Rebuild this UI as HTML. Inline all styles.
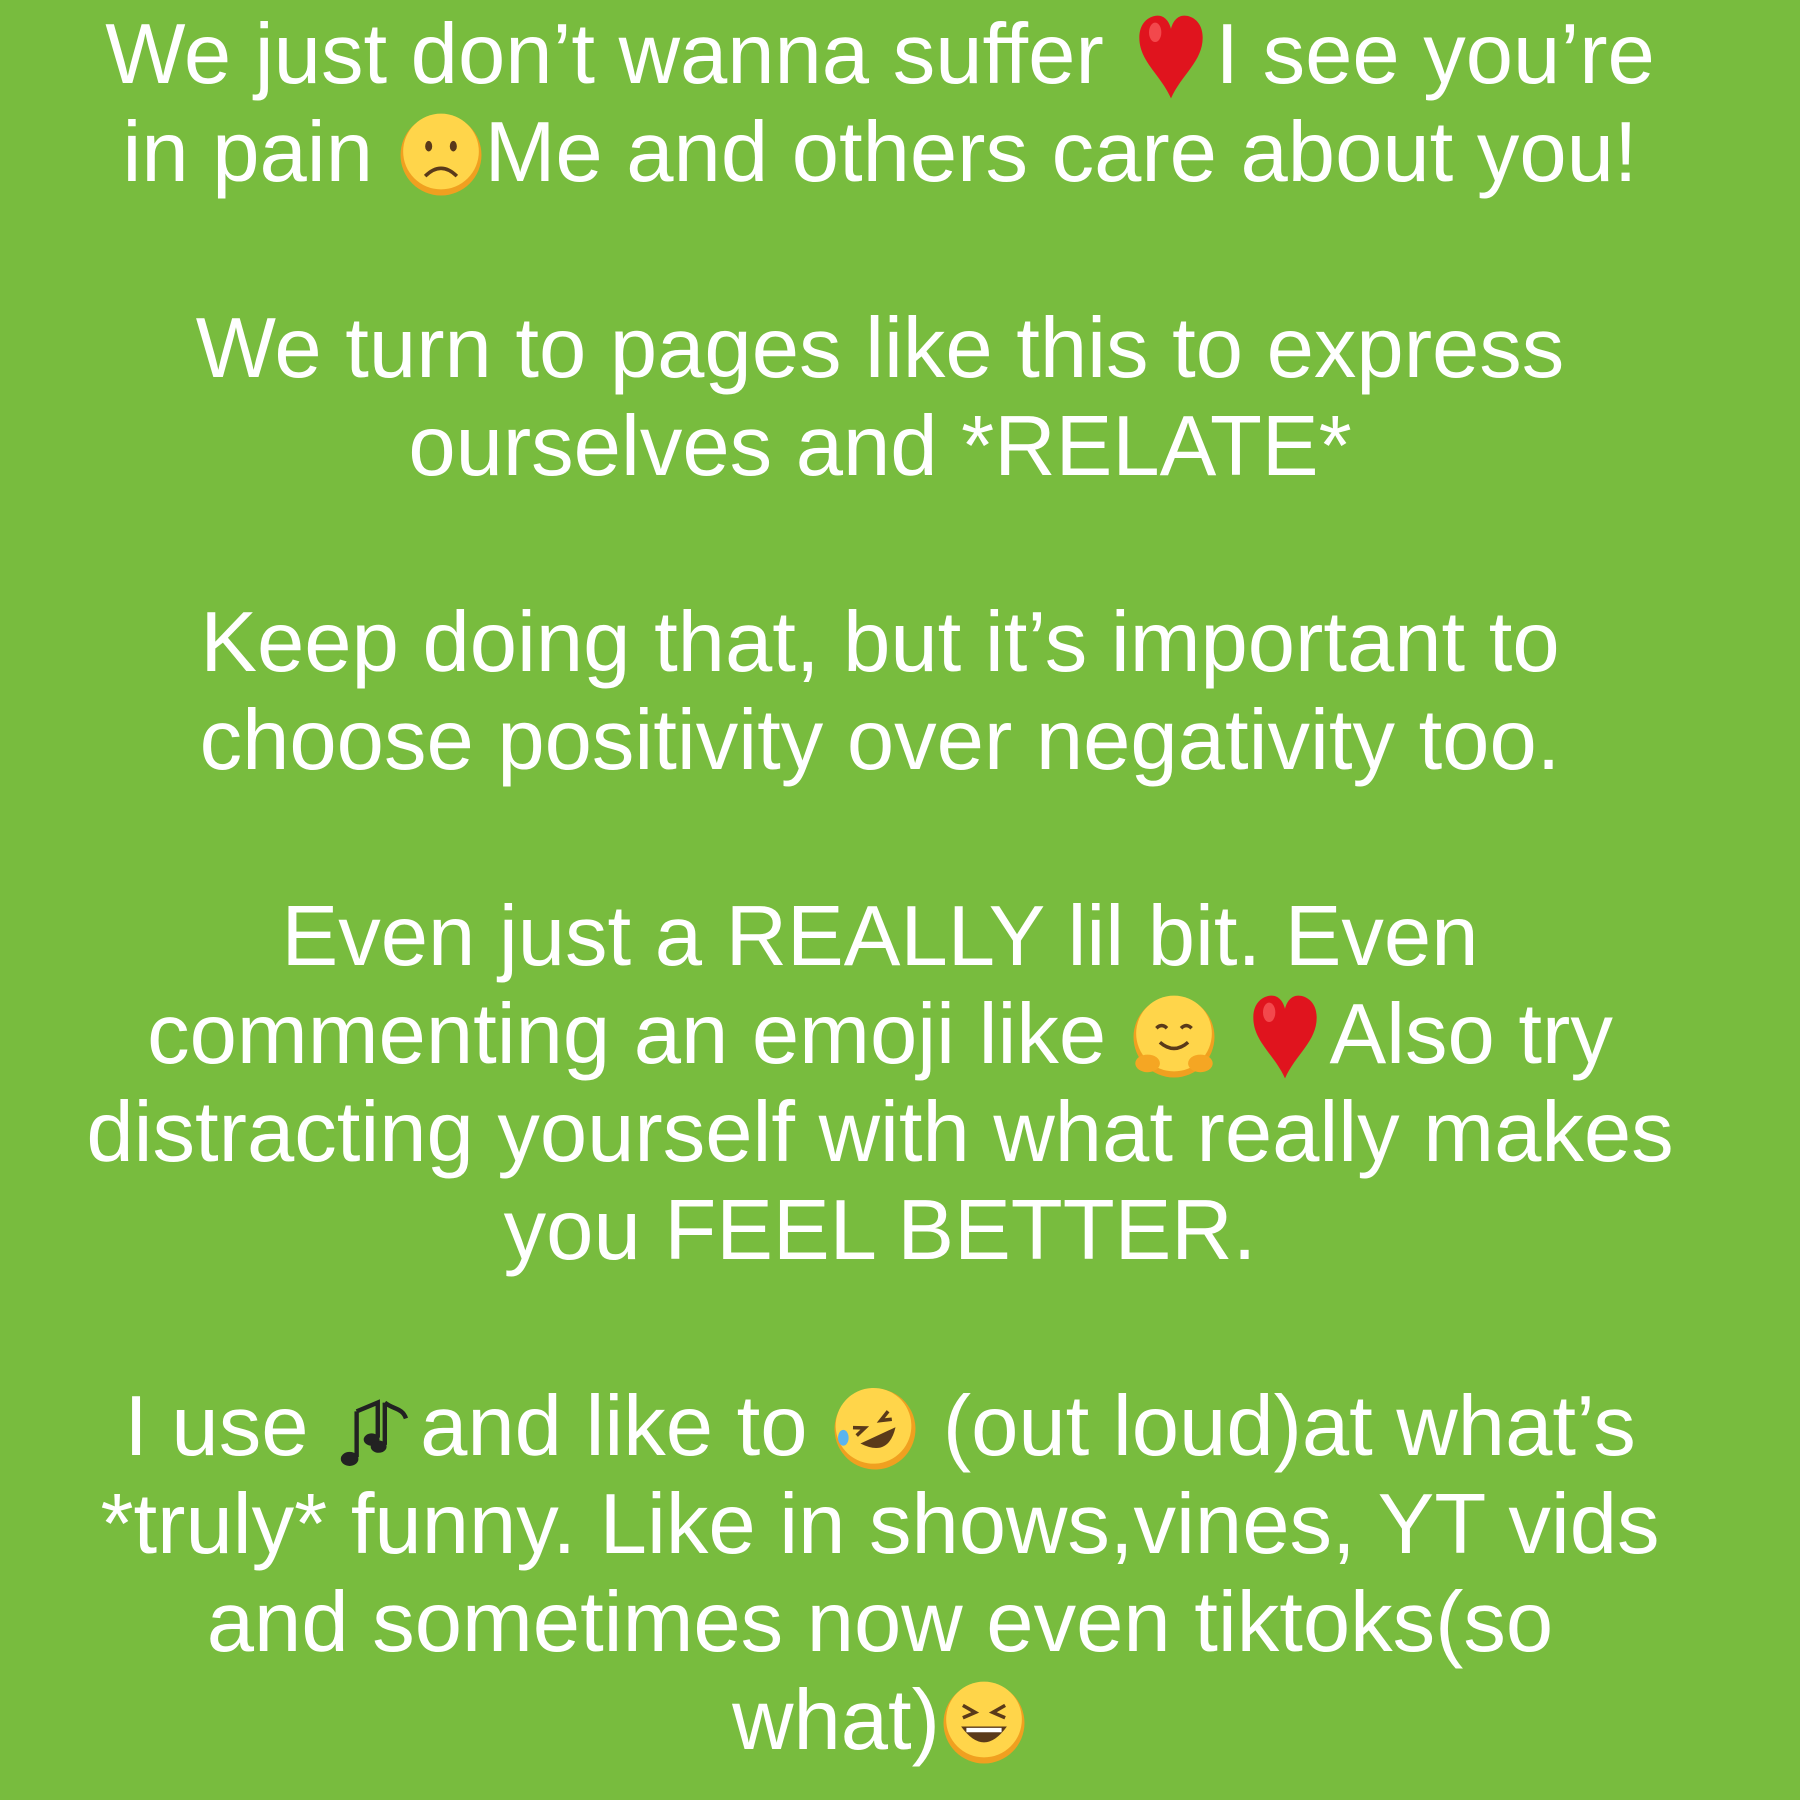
<!DOCTYPE html>
<html><head><meta charset="utf-8"><style>
html,body{margin:0;padding:0}
body{width:1800px;height:1800px;background:#78bc3e;overflow:hidden;font-family:"Liberation Sans",Arial,sans-serif;color:#fff;font-size:85px}
.w{position:absolute;top:6px;left:-20px;width:1800px;text-align:center}
.l{height:98px;line-height:98px;white-space:nowrap}
svg{display:inline-block;vertical-align:-18px;width:88px;height:88px}
</style></head><body>
<svg width="0" height="0" style="position:absolute"><defs>
<symbol id="heart" viewBox="0 0 100 100"><path d="M50 97 C38 70 14 55 14 28 C14 10 26 3 35 3 C43 3 48 10 50 18 C52 10 57 3 65 3 C74 3 86 10 86 28 C86 55 62 70 50 97Z" fill="#e0141e"/><ellipse cx="32" cy="22" rx="7" ry="11" fill="#ff6b6b" opacity=".6"/></symbol>
<symbol id="face" viewBox="0 0 100 100"><circle cx="50" cy="50" r="46" fill="#f0a020"/><circle cx="50" cy="46" r="43" fill="#ffd54a"/></symbol>
</defs></svg>
<div class="w">
<div class="l">We just don’t wanna suffer <svg viewBox="0 0 100 100"><use href="#heart"/></svg>I see you’re</div>
<div class="l">in pain <svg viewBox="0 0 100 100"><use href="#face"/><ellipse cx="36" cy="40" rx="4" ry="6" fill="#5a3a1a"/><ellipse cx="64" cy="40" rx="4" ry="6" fill="#5a3a1a"/><path d="M32 74 Q50 56 68 74" stroke="#5a3a1a" stroke-width="4" fill="none"/></svg>Me and others care about you!</div>
<div class="l"></div>
<div class="l">We turn to pages like this to express</div>
<div class="l">ourselves and *RELATE*</div>
<div class="l"></div>
<div class="l">Keep doing that, but it’s important to</div>
<div class="l">choose positivity over negativity too.</div>
<div class="l"></div>
<div class="l">Even just a REALLY lil bit. Even</div>
<div class="l">commenting an emoji like <svg viewBox="0 0 100 100"><use href="#face"/><path d="M30 40 Q36 34 42 40 M58 40 Q64 34 70 40" stroke="#5a3a1a" stroke-width="4" fill="none"/><path d="M34 56 Q50 70 66 56" stroke="#5a3a1a" stroke-width="4" fill="none"/><ellipse cx="20" cy="80" rx="14" ry="10" fill="#f5a623"/><ellipse cx="80" cy="80" rx="14" ry="10" fill="#f5a623"/></svg> <svg viewBox="0 0 100 100"><use href="#heart"/></svg>Also try</div>
<div class="l">distracting yourself with what really makes</div>
<div class="l">you FEEL BETTER.</div>
<div class="l"></div>
<div class="l">I use <svg viewBox="0 0 100 100"><path d="M28 30 L28 82 M28 30 L52 20 L52 60 M60 20 L60 68 M60 20 C70 28 80 26 84 38" stroke="#222" stroke-width="5" fill="none"/><ellipse cx="20" cy="84" rx="10" ry="8" fill="#222"/><ellipse cx="45" cy="62" rx="9" ry="7" fill="#222"/><ellipse cx="53" cy="70" rx="9" ry="7" fill="#222"/></svg>and like to <svg viewBox="0 0 100 100"><g transform="rotate(-25 50 50)"><use href="#face"/><path d="M28 38 L40 44 L28 48 M72 38 L60 44 L72 48" stroke="#5a3a1a" stroke-width="4" fill="none"/><path d="M28 58 Q50 86 72 58Z" fill="#5a3a1a"/></g><ellipse cx="14" cy="60" rx="6" ry="9" fill="#5ab4f0"/></svg> (out loud)at what’s</div>
<div class="l">*truly* funny. Like in shows,vines, YT vids</div>
<div class="l">and sometimes now even tiktoks(so</div>
<div class="l">what)<svg viewBox="0 0 100 100"><use href="#face"/><path d="M26 30 L40 38 L26 44 M74 30 L60 38 L74 44" stroke="#5a3a1a" stroke-width="4" fill="none"/><path d="M24 54 Q50 90 76 54Z" fill="#5a3a1a"/><path d="M30 58 L70 58" stroke="#fff" stroke-width="5"/></svg></div>
</div>
</body></html>
